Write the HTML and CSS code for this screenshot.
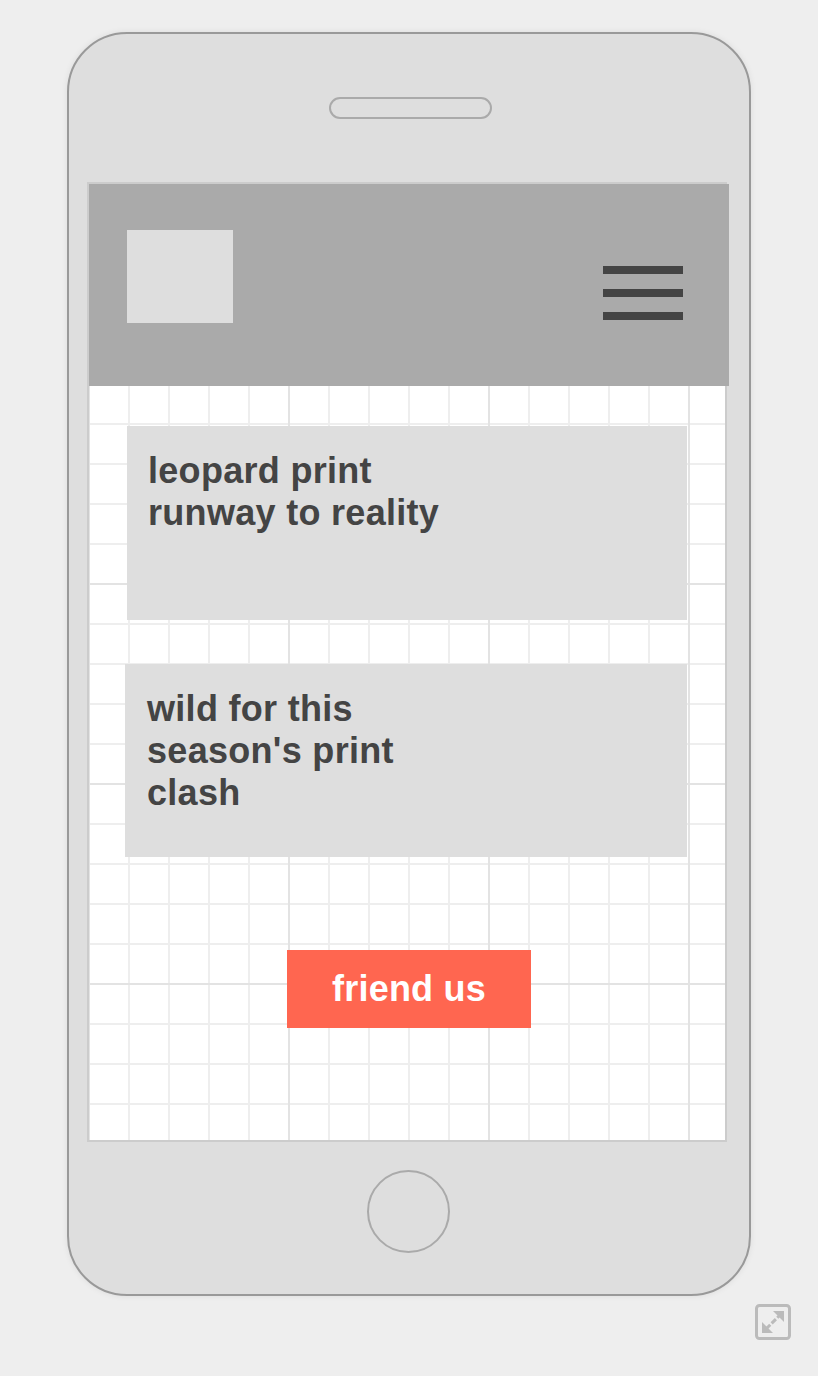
FILE: index.html
```html
<!DOCTYPE html>
<html lang="en">
<head>
<meta charset="utf-8">
<title>Mobile wireframe</title>
<link rel="stylesheet" href="styles.css">
</head>
<body>
<div class="page">
  <div class="phone">
    <div class="speaker"></div>
    <div class="screen">
      <header class="app-header">
        <div class="logo"></div>
        <div class="hamburger">
          <span class="bar"></span>
          <span class="bar"></span>
          <span class="bar"></span>
        </div>
      </header>
      <div class="card card-one">
        <p class="card-title">leopard print<br>runway to reality</p>
      </div>
      <div class="card card-two">
        <p class="card-title">wild for this<br>season's print<br>clash</p>
      </div>
      <div class="cta">friend us</div>
    </div>
    <div class="home-button"></div>
  </div>
  <div class="tools">
    <svg class="expand" width="36" height="36" viewBox="0 0 36 36" aria-hidden="true">
      <rect x="1.5" y="1.5" width="33" height="33" rx="3" fill="none" stroke="#bbbbbb" stroke-width="3"/>
      <polygon points="29,7 29,18 18,7" fill="#bbbbbb"/>
      <polygon points="7,29 7,18 18,29" fill="#bbbbbb"/>
      <line x1="11" y1="25" x2="25" y2="11" stroke="#bbbbbb" stroke-width="3" stroke-dasharray="6 2"/>
    </svg>
  </div>
</div>
</body>
</html>
```

FILE: styles.css
```css
* {
  box-sizing: border-box;
}

html, body {
  margin: 0;
  padding: 0;
}

body {
  background: #eeeeee;
  font-family: "Liberation Sans", Arial, Helvetica, sans-serif;
}

.page {
  width: 818px;
  height: 1376px;
  padding-top: 32px;
  display: flex;
  flex-direction: column;
  align-items: center;
}

.phone {
  width: 684px;
  height: 1264px;
  border: 2px solid #999999;
  border-radius: 60px;
  background: #dedede;
  box-shadow: 0 0 6px rgba(0, 0, 0, 0.08);
  display: flex;
  flex-direction: column;
  align-items: flex-start;
  padding-left: 18px;
}

.speaker {
  width: 163px;
  height: 22px;
  margin-top: 63px;
  margin-left: 242px;
  border: 2px solid #aaaaaa;
  border-radius: 11px;
}

.screen {
  width: 640px;
  height: 960px;
  margin-top: 63px;
  border: 2px solid #cccccc;
  background-color: #ffffff;
  background-image:
    linear-gradient(to right, #e3e3e3 2px, transparent 2px),
    linear-gradient(to bottom, #e3e3e3 2px, transparent 2px),
    linear-gradient(to right, #eeeeee 2px, transparent 2px),
    linear-gradient(to bottom, #eeeeee 2px, transparent 2px);
  background-size: 200px 200px, 200px 200px, 40px 40px, 40px 40px;
  background-position: -1px -1px;
  display: flex;
  flex-direction: column;
  align-items: flex-start;
}

.app-header {
  width: 640px;
  height: 202px;
  flex-shrink: 0;
  background: #aaaaaa;
  display: flex;
  align-items: flex-start;
  padding: 46px 0 0 38px;
}

.logo {
  width: 106px;
  height: 93px;
  background: #dedede;
}

.hamburger {
  margin-left: 370px;
  margin-top: 36px;
  display: flex;
  flex-direction: column;
  gap: 15px;
}

.bar {
  display: block;
  width: 80px;
  height: 8px;
  background: #444444;
}

.card {
  background: #dedede;
  flex-shrink: 0;
}

.card-one {
  width: 560px;
  height: 194px;
  margin: 40px 0 0 38px;
  padding: 24px 21px 0;
}

.card-two {
  width: 562px;
  height: 193px;
  margin: 44px 0 0 36px;
  padding: 24px 22px 0;
}

.card-title {
  margin: 0;
  font-size: 36px;
  line-height: 42px;
  font-weight: 700;
  letter-spacing: 0.3px;
  color: #444444;
}

.cta {
  width: 244px;
  height: 78px;
  margin: 93px 0 0 198px;
  background: #ff6650;
  color: #ffffff;
  font-size: 36px;
  font-weight: 700;
  letter-spacing: 0.2px;
  display: flex;
  align-items: center;
  justify-content: center;
}

.home-button {
  width: 83px;
  height: 83px;
  margin-top: 28px;
  margin-left: 280px;
  border: 2px solid #aaaaaa;
  border-radius: 50%;
}

.tools {
  width: 818px;
  display: flex;
  justify-content: flex-end;
  padding-right: 27px;
  margin-top: 8px;
}

.expand {
  display: block;
}
```
